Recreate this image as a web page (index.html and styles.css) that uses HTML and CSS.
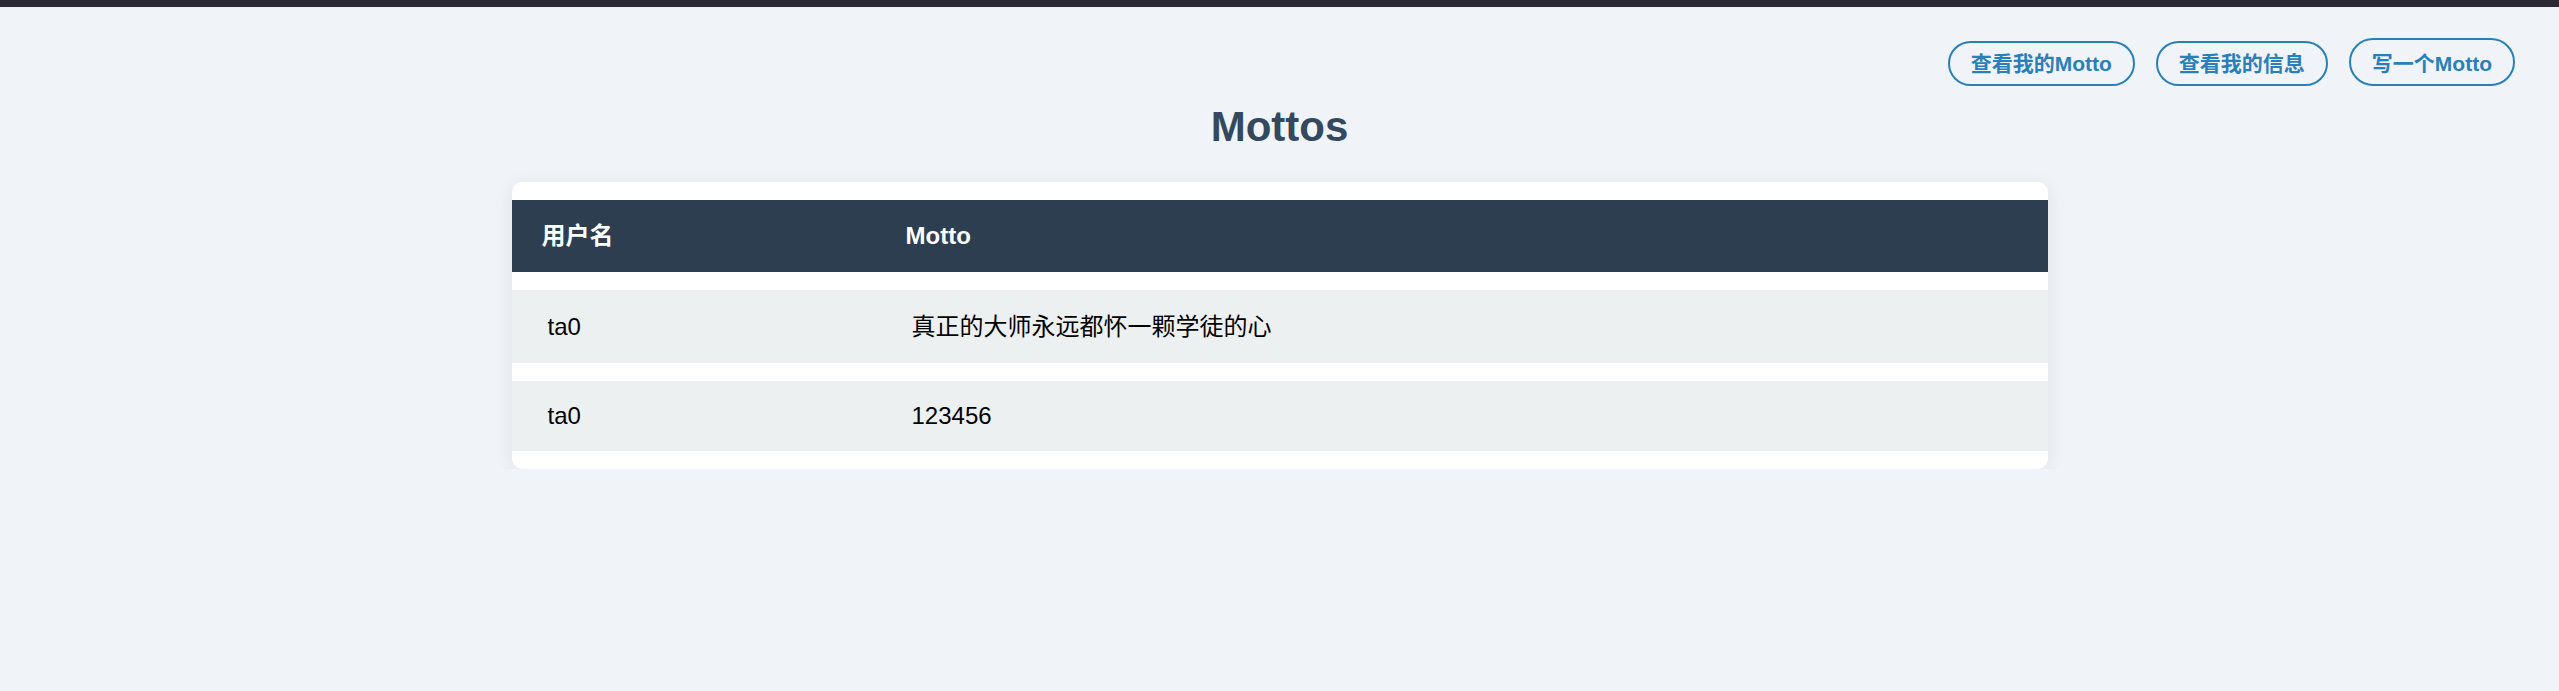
FILE: index.html
```html
<!DOCTYPE html>
<html lang="zh-CN">
<head>
<meta charset="utf-8">
<title>Mottos</title>
<link rel="stylesheet" href="styles.css">
</head>
<body>
<div class="topbar"></div>
<nav class="nav">
  <a class="btn" href="#">查看我的Motto</a>
  <a class="btn" href="#">查看我的信息</a>
  <a class="btn btn-tall" href="#">写一个Motto</a>
</nav>
<h1 class="title">Mottos</h1>
<div class="card">
  <table class="table">
    <colgroup><col class="col-user"><col></colgroup>
    <thead>
      <tr><th>用户名</th><th>Motto</th></tr>
    </thead>
    <tbody>
      <tr class="row-cjk"><td>ta0</td><td>真正的大师永远都怀一颗学徒的心</td></tr>
      <tr><td>ta0</td><td>123456</td></tr>
    </tbody>
  </table>
</div>
</body>
</html>
```
FILE: styles.css
```css
html, body {
  margin: 0;
  padding: 0;
}
body {
  background: #f0f4f8;
  font-family: "Liberation Sans", "Noto Sans CJK SC", sans-serif;
  color: #000;
}
.topbar {
  height: 7px;
  background: #2b2a33;
}
.nav {
  display: flex;
  justify-content: flex-end;
  align-items: flex-end;
  gap: 21px;
  padding: 31px 44px 0 0;
}
.btn {
  display: block;
  font-size: 21px;
  font-weight: bold;
  line-height: 25px;
  color: #2980b9;
  text-decoration: none;
  border: 2px solid #2980b9;
  border-radius: 999px;
  padding: 8px 21px;
  white-space: nowrap;
}
.btn-tall {
  padding-top: 11px;
}
.title {
  margin: 17px 0 31px;
  text-align: center;
  font-size: 42px;
  line-height: 48px;
  font-weight: bold;
  color: #34495e;
}
.card {
  width: 1536px;
  margin: 0 auto;
  background: #fff;
  border-radius: 10px;
  overflow: hidden;
  box-shadow: 0 4px 20px rgba(0, 0, 0, 0.08);
}
.table {
  width: 100%;
  table-layout: fixed;
  border-collapse: separate;
  border-spacing: 0 18px;
  margin: 0;
}
.col-user {
  width: 364px;
}
.table th {
  background: #2c3e50;
  color: #fff;
  font-size: 24px;
  font-weight: bold;
  line-height: 28px;
  text-align: left;
  padding: 22px 30px;
}
.table td {
  background: #ecf0f1;
  font-size: 24px;
  line-height: 26px;
  padding: 22px 36px;
  text-align: left;
}
.row-cjk td {
  line-height: 29px;
}
```
